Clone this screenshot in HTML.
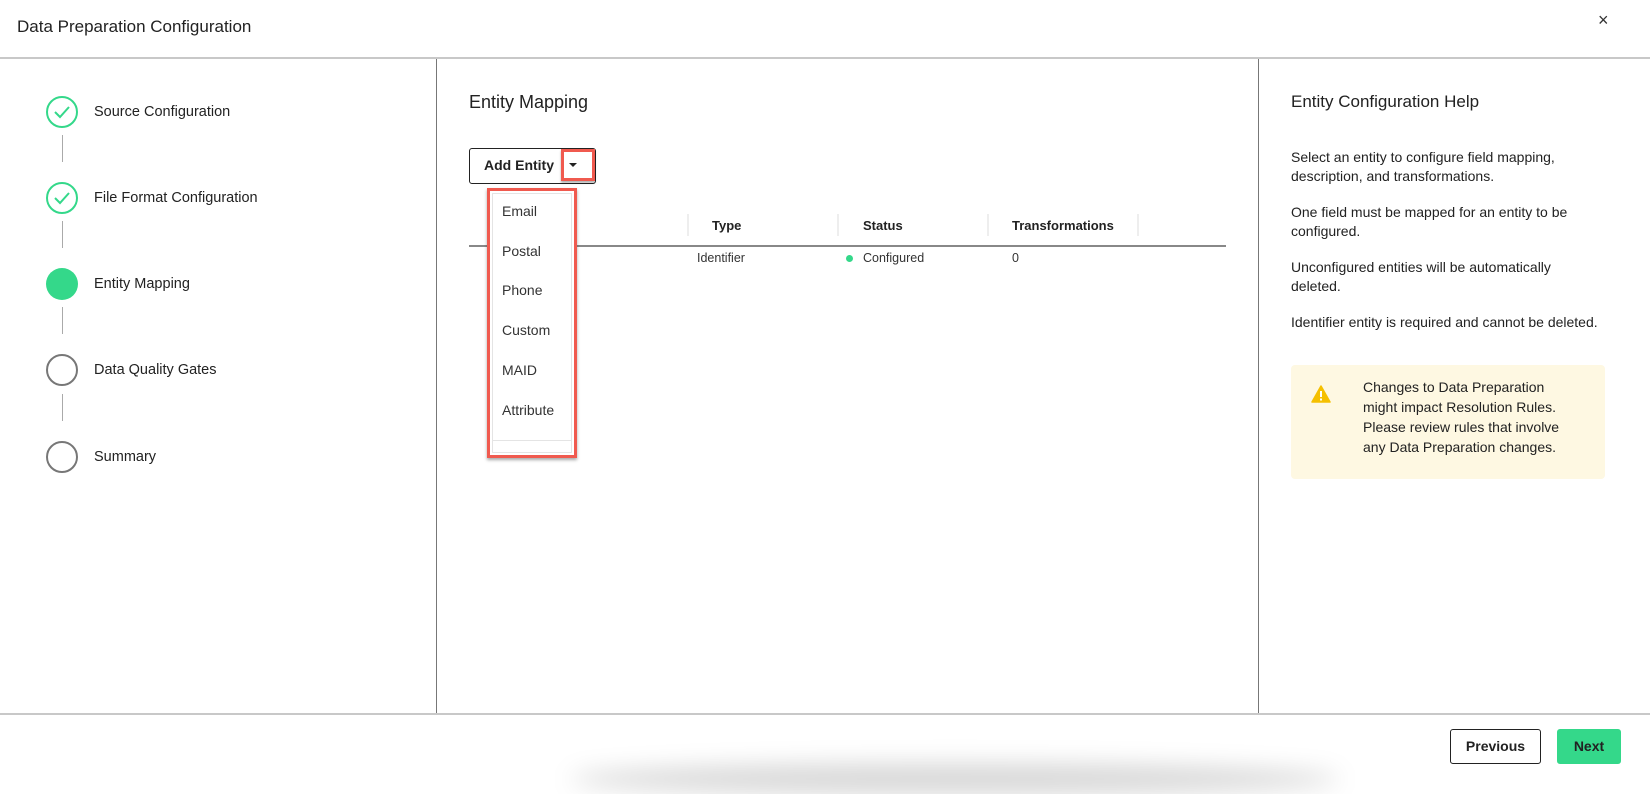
<!DOCTYPE html>
<html><head><meta charset="utf-8"><style>
*{box-sizing:border-box;margin:0;padding:0}
body{width:1650px;height:769px;background:#fff;font-family:"Liberation Sans",sans-serif;color:#222;position:relative;overflow:hidden}
.a{position:absolute;white-space:nowrap}
.circ{position:absolute;width:32px;height:32px;border-radius:50%;left:46px}
.lbl{position:absolute;left:94px;font-size:14.5px;color:#222}
.vl{position:absolute;left:62px;width:1px;background:#aaa}
.it{position:absolute;left:502px;font-size:14px;color:#333}
.th{position:absolute;font-size:13px;font-weight:bold;color:#222}
.sep{position:absolute;top:214px;width:2px;height:22px;background:#eee}
.p{position:absolute;left:1291px;font-size:14px;line-height:19px;color:#222;white-space:nowrap}
</style></head><body>
<div class="a" style="left:17px;top:17px;font-size:17px;color:#222">Data Preparation Configuration</div>
<div class="a" style="left:1598px;top:10px;font-size:18px;color:#333">×</div>
<div class="a" style="left:0;top:57px;width:1650px;height:2px;background:#c8c8c8"></div>
<div class="a" style="left:436px;top:59px;width:1px;height:655px;background:#777"></div>
<div class="a" style="left:1258px;top:59px;width:1px;height:655px;background:#777"></div>
<div class="a" style="left:0;top:713px;width:1650px;height:2px;background:#c8c8c8"></div>

<!-- steps -->
<div class="circ" style="top:96px;border:2px solid #34d88a"></div>
<svg class="a" style="left:52px;top:103px" width="20" height="18"><path d="M3 9 L8 14 L17 4" fill="none" stroke="#34d88a" stroke-width="2"/></svg>
<div class="lbl" style="top:104px">Source Configuration</div>
<div class="vl" style="top:135px;height:27px"></div>
<div class="circ" style="top:182px;border:2px solid #34d88a"></div>
<svg class="a" style="left:52px;top:189px" width="20" height="18"><path d="M3 9 L8 14 L17 4" fill="none" stroke="#34d88a" stroke-width="2"/></svg>
<div class="lbl" style="top:190px">File Format Configuration</div>
<div class="vl" style="top:221px;height:27px"></div>
<div class="circ" style="top:268px;background:#34d88a"></div>
<div class="lbl" style="top:276px">Entity Mapping</div>
<div class="vl" style="top:307px;height:27px"></div>
<div class="circ" style="top:354px;border:2px solid #777"></div>
<div class="lbl" style="top:362px">Data Quality Gates</div>
<div class="vl" style="top:394px;height:27px"></div>
<div class="circ" style="top:441px;border:2px solid #777"></div>
<div class="lbl" style="top:449px">Summary</div>

<!-- middle -->
<div class="a" style="left:469px;top:92px;font-size:18px;color:#222">Entity Mapping</div>
<div class="a" style="left:469px;top:148px;width:127px;height:36px;border:1px solid #222;border-radius:3px"></div>
<div class="a" style="left:484px;top:157px;font-size:14px;font-weight:bold;color:#222">Add Entity</div>
<div class="a" style="left:561px;top:149px;width:34px;height:32px;border:3px solid #f05a4f;box-shadow:0 2px 2px rgba(0,0,0,.3)"></div>
<svg class="a" style="left:568px;top:162px" width="10" height="6"><path d="M1 1 L9 1 L5 5 Z" fill="#222"/></svg>

<div class="th" style="left:712px;top:218px">Type</div>
<div class="th" style="left:863px;top:218px">Status</div>
<div class="th" style="left:1012px;top:218px">Transformations</div>
<div class="sep" style="left:687px"></div>
<div class="sep" style="left:837px"></div>
<div class="sep" style="left:987px"></div>
<div class="sep" style="left:1137px"></div>
<div class="a" style="left:469px;top:245px;width:757px;height:2px;background:#888"></div>
<div class="a" style="left:697px;top:251px;font-size:12.5px;color:#333">Identifier</div>
<div class="a" style="left:846px;top:255px;width:7px;height:7px;border-radius:50%;background:#34d88a"></div>
<div class="a" style="left:863px;top:251px;font-size:12.5px;color:#333">Configured</div>
<div class="a" style="left:1012px;top:251px;font-size:12.5px;color:#333">0</div>

<div class="a" style="left:487px;top:188px;width:90px;height:270px;background:#fff;border:3px solid #f05a4f;box-shadow:0 2px 3px rgba(0,0,0,.35)">
<div style="position:absolute;left:2px;top:2px;right:2px;bottom:2px;border:1px solid #e4e4e4"></div>
<div style="position:absolute;left:3px;right:3px;top:249px;height:1px;background:#e4e4e4"></div>
</div>
<div class="it" style="top:203px">Email</div>
<div class="it" style="top:243px">Postal</div>
<div class="it" style="top:282px">Phone</div>
<div class="it" style="top:322px">Custom</div>
<div class="it" style="top:362px">MAID</div>
<div class="it" style="top:402px">Attribute</div>

<!-- right -->
<div class="a" style="left:1291px;top:92px;font-size:17px;color:#222">Entity Configuration Help</div>
<div class="p" style="top:148px">Select an entity to configure field mapping,<br>description, and transformations.</div>
<div class="p" style="top:203px">One field must be mapped for an entity to be<br>configured.</div>
<div class="p" style="top:258px">Unconfigured entities will be automatically<br>deleted.</div>
<div class="p" style="top:313px">Identifier entity is required and cannot be deleted.</div>
<div class="a" style="left:1291px;top:365px;width:314px;height:114px;background:#fef8e2;border-radius:4px"></div>
<svg class="a" style="left:1311px;top:385px" width="20" height="18"><path d="M10 1 L19 17 L1 17 Z" fill="#f5c000" stroke="#f5c000" stroke-linejoin="round" stroke-width="1.5"/><rect x="9" y="6" width="2" height="6" fill="#fff"/><rect x="9" y="13.5" width="2" height="2" fill="#fff"/></svg>
<div class="a" style="left:1363px;top:377px;font-size:14px;line-height:20px;color:#222">Changes to Data Preparation<br>might impact Resolution Rules.<br>Please review rules that involve<br>any Data Preparation changes.</div>

<!-- footer -->
<div class="a" style="left:570px;top:764px;width:770px;height:30px;border-radius:50%;background:rgba(0,0,0,.16);filter:blur(12px)"></div>
<div class="a" style="left:1450px;top:729px;width:91px;height:35px;border:1px solid #222;border-radius:3px;font-size:14px;font-weight:bold;text-align:center;line-height:33px;color:#222">Previous</div>
<div class="a" style="left:1557px;top:729px;width:64px;height:35px;background:#34d88a;border-radius:3px;font-size:14px;font-weight:bold;text-align:center;line-height:35px;color:#222">Next</div>
</body></html>
